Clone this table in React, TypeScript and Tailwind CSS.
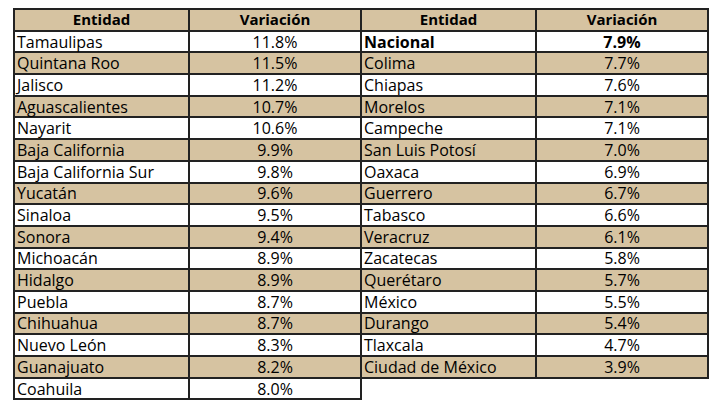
const left: [string, string][] = [
  ['Tamaulipas', '11.8%'],
  ['Quintana Roo', '11.5%'],
  ['Jalisco', '11.2%'],
  ['Aguascalientes', '10.7%'],
  ['Nayarit', '10.6%'],
  ['Baja California', '9.9%'],
  ['Baja California Sur', '9.8%'],
  ['Yucatán', '9.6%'],
  ['Sinaloa', '9.5%'],
  ['Sonora', '9.4%'],
  ['Michoacán', '8.9%'],
  ['Hidalgo', '8.9%'],
  ['Puebla', '8.7%'],
  ['Chihuahua', '8.7%'],
  ['Nuevo León', '8.3%'],
  ['Guanajuato', '8.2%'],
  ['Coahuila', '8.0%'],
]

const right: [string, string][] = [
  ['Nacional', '7.9%'],
  ['Colima', '7.7%'],
  ['Chiapas', '7.6%'],
  ['Morelos', '7.1%'],
  ['Campeche', '7.1%'],
  ['San Luis Potosí', '7.0%'],
  ['Oaxaca', '6.9%'],
  ['Guerrero', '6.7%'],
  ['Tabasco', '6.6%'],
  ['Veracruz', '6.1%'],
  ['Zacatecas', '5.8%'],
  ['Querétaro', '5.7%'],
  ['México', '5.5%'],
  ['Durango', '5.4%'],
  ['Tlaxcala', '4.7%'],
  ['Ciudad de México', '3.9%'],
]

function DataTable({ rows, boldFirst }: { rows: [string, string][]; boldFirst?: boolean }) {
  return (
    <table className="w-[349px] table-fixed border-collapse text-[16px] leading-none text-black">
      <colgroup>
        <col className="w-[175px]" />
        <col />
      </colgroup>
      <thead>
        <tr className="h-[21.7px] bg-[#d6c3a1]">
          <th className="border-2 border-[#222] text-center text-[15px] font-bold">Entidad</th>
          <th className="border-2 border-[#222] text-center text-[15px] font-bold">Variación</th>
        </tr>
      </thead>
      <tbody>
        {rows.map(([name, value], i) => (
          <tr key={name} className={`h-[21.7px] ${i % 2 === 1 ? 'bg-[#d6c3a1]' : 'bg-white'} ${boldFirst && i === 0 ? 'font-bold' : ''}`}>
            <td className="border-2 border-[#222] px-[2px] text-left">{name}</td>
            <td className="border-2 border-[#222] text-center">{value}</td>
          </tr>
        ))}
      </tbody>
    </table>
  )
}

export default function App() {
  return (
    <div className="h-[410px] w-[720px] bg-white pl-[13px] pt-[8px] font-['Open_Sans',sans-serif]">
      <div className="flex items-start">
        <DataTable rows={left} />
        <div className="-ml-[2px]">
          <DataTable rows={right} boldFirst />
        </div>
      </div>
    </div>
  )
}
